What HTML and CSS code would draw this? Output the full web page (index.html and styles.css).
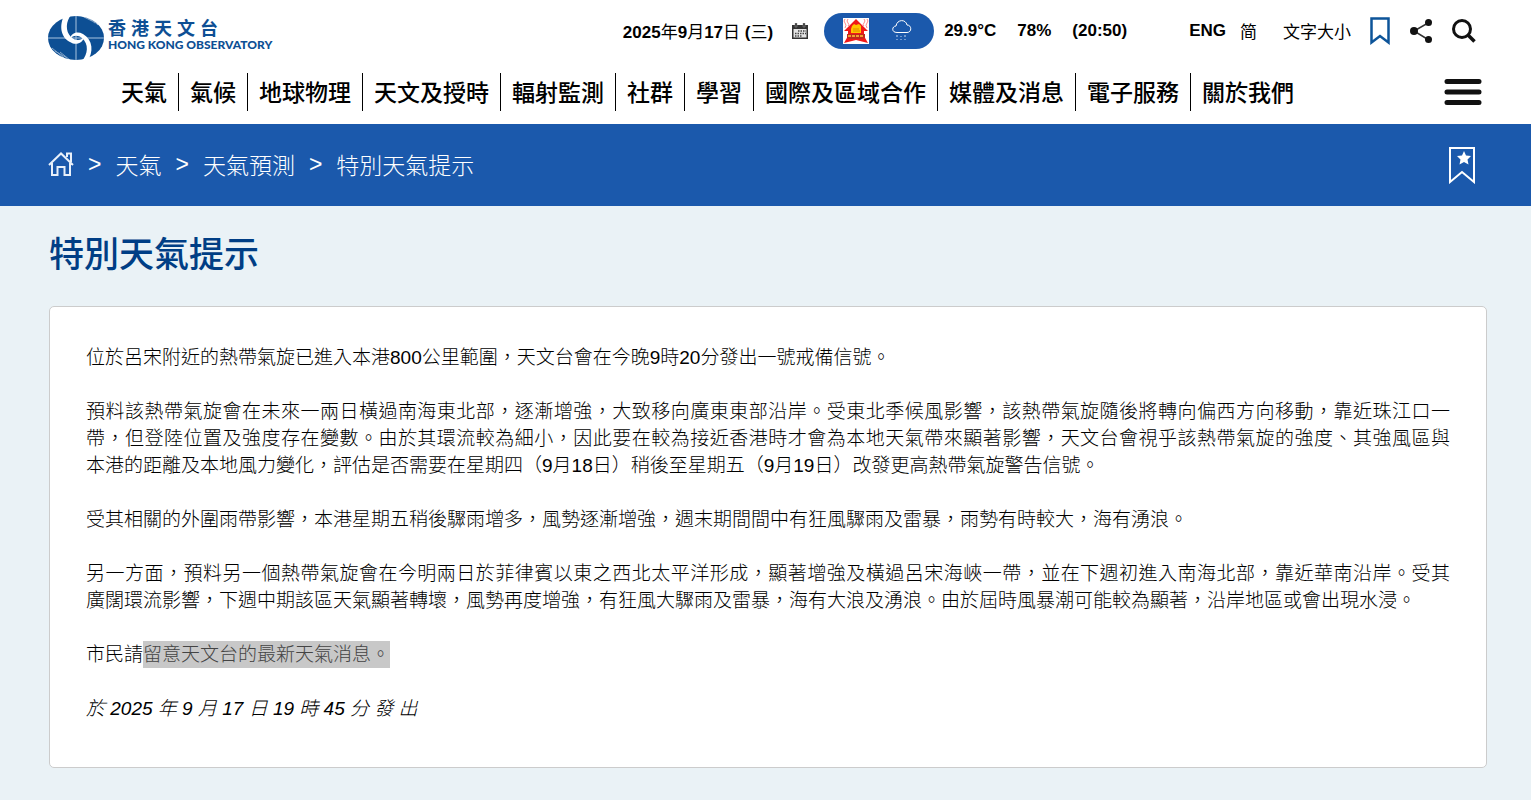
FILE: index.html
```html
<!DOCTYPE html>
<html lang="zh-Hant-HK">
<head>
    <meta charset="UTF-8">
    <meta name="viewport" content="width=device-width, initial-scale=1.0">
    <title>特別天氣提示 | 香港天文台</title>
    <link rel="stylesheet" href="styles.css">
</head>
<body>
    <header class="header">
        <div class="top-row">
            <a class="logo" href="#">
                <svg class="logo-mark" viewBox="0 0 56 48" aria-hidden="true">
                    <ellipse cx="28" cy="24" rx="28" ry="22" fill="#0d4f94"/>
                    <path d="M0 24h56M28 2v44" stroke="#a9c4df" stroke-width="1"/>
                    <path d="M17 0C11 10 12 23 22 28c6 4 13 1 14-5-3 4-9 4-13 0C17 17 18 7 23 1z" fill="#fff"/>
                    <path d="M39 48c7-10 6-22-4-28-6-3-12-1-13 5 3-4 8-4 12-1 7 6 6 16 0 23z" fill="#fff"/>
                    <path d="M32 1l12 6M36 1l11 8M40 2l10 9M7 37l12 7M4 34l12 10M12 38l10 8" stroke="#fff" stroke-width="1" opacity=".5"/>
                </svg>
                <span class="logo-text">
                    <span class="logo-zh">香 港 天 文 台</span>
                    <span class="logo-en">HONG KONG OBSERVATORY</span>
                </span>
            </a>
            <div class="status">
                <span class="date"><b>2025</b>年<b>9</b>月<b>17</b>日 <b>(</b>三<b>)</b></span>
                <a class="calendar" href="#" aria-label="日曆">
                    <svg width="16" height="16" viewBox="0 0 16 16">
                        <path d="M0 2h16v14H0z" fill="#333"/>
                        <path d="M1.500 6h13v8.500h-13z" fill="#e4e4e4"/>
                        <path d="M3 0h2v4H3zM11 0h2v4h-2z" fill="#333" stroke="#999" stroke-width=".5"/>
                        <path d="M6 8h8M3 10.500h11M3 13h7" stroke="#444" stroke-width="1.500" stroke-dasharray="1.500 1"/>
                    </svg>
                </a>
                <a class="weather-pill" href="#" aria-label="現時天氣">
                    <svg width="26" height="26" viewBox="0 0 26 26">
                        <path d="M0 0h26v26H0z" fill="#fff"/>
                        <path d="M2 1q-2 2 0 4t0 5M5 1q-2 2 0 4t0 3M21 1q2 2 0 4t0 3M24 1q2 2 0 4t0 5" stroke="#f88" fill="none"/>
                        <path d="M13 1l12 12h-4v5l4 7-12-3-12 3 4-7v-5H1z" fill="#f01818"/>
                        <path d="M9 8l2-2 2 1 3-1 2 2v7H8v-4z" fill="#ffc400"/>
                        <path d="M4 16h18v4l-4 1H8l-4-1z" fill="#c0281c"/>
                        <path d="M5 18h16" stroke="#f0a030" stroke-width="2" stroke-dasharray="3 1"/>
                        <path d="M10 11h6M10 13h7" stroke="#e08a00"/>
                    </svg>
                    <svg width="20" height="21" viewBox="0 0 20 21">
                        <path d="M5 12.500C-1 12.500 0 6 4 6 5-1 14-1 15 5c5 0 5 7.500 0 7.500z" fill="none" stroke="#fff" stroke-width="1"/>
                        <path d="M5 15v2M13 15v2M5 19v1M13 19v1M9 16v1M9 19v1" stroke="#c8daf0" stroke-width="1"/>
                    </svg>
                </a>
                <span class="reading"><b>29.9°C</b><b>78%</b><b>(20:50)</b></span>
                <span class="lang"><a href="#"><b>ENG</b></a><a class="sc" href="#" lang="zh-Hans">简</a></span>
                <a class="text-size" href="#">文字大小</a>
                <span class="tools">
                    <button type="button" aria-label="書籤">
                        <svg width="20" height="28" viewBox="0 0 20 28"><path d="M1.500 1.500h17v24L10 19l-8.500 6.500z" fill="none" stroke="#0d5499" stroke-width="2.500"/></svg>
                    </button>
                    <button type="button" aria-label="分享">
                        <svg width="22" height="24" viewBox="0 0 22 24"><path d="M18 4L4 12l14 8.500" fill="none" stroke="#333" stroke-width="1.500"/><circle cx="18.500" cy="3.500" r="3.500" fill="#111"/><circle cx="4" cy="12" r="4" fill="#111"/><circle cx="18.500" cy="20.500" r="3.500" fill="#111"/></svg>
                    </button>
                    <button type="button" aria-label="搜尋">
                        <svg width="24" height="24" viewBox="0 0 24 24"><circle cx="10" cy="10" r="8.500" fill="none" stroke="#111" stroke-width="3"/><path d="M16 16l6.500 6.500" stroke="#111" stroke-width="3.500"/></svg>
                    </button>
                </span>
            </div>
        </div>
        <div class="nav-row">
            <nav class="main-nav">
                <a href="#">天氣</a>
                <a href="#">氣候</a>
                <a href="#">地球物理</a>
                <a href="#">天文及授時</a>
                <a href="#">輻射監測</a>
                <a href="#">社群</a>
                <a href="#">學習</a>
                <a href="#">國際及區域合作</a>
                <a href="#">媒體及消息</a>
                <a href="#">電子服務</a>
                <a href="#">關於我們</a>
            </nav>
            <button class="menu-btn" type="button" aria-label="選單">
                <svg width="38" height="28" viewBox="0 0 38 28"><path d="M3 3.500h32M3 14h32M3 24.500h32" stroke="#111" stroke-width="5" stroke-linecap="round"/></svg>
            </button>
        </div>
    </header>

    <div class="crumb-bar">
        <nav class="crumbs" aria-label="導覽路徑">
            <a class="home" href="#" aria-label="主頁">
                <svg width="26" height="24" viewBox="0 0 26 24"><path d="M1 13L13 1.500 25 13M19 5V1.500h4V10M4 11v12h5.500v-8h7v8H22V11" fill="none" stroke="#e8f0fa" stroke-width="2"/></svg>
            </a>
            <span>&gt;</span>
            <a href="#">天氣</a>
            <span>&gt;</span>
            <a href="#">天氣預測</a>
            <span>&gt;</span>
            <a href="#">特別天氣提示</a>
        </nav>
        <button class="add-bookmark" type="button" aria-label="加入書籤">
            <svg width="26" height="37" viewBox="0 0 26 37"><path d="M1 1h24v34L13 25 1 35z" fill="none" stroke="#fff" stroke-width="2"/><path d="M15 4l2 4.500 5 .5-3.500 3.500 1 5L15 15l-4.500 2.500 1-5L8 9l5-.5z" fill="#fff"/></svg>
        </button>
    </div>

    <main class="content">
        <h1>特別天氣提示</h1>
        <article class="card">
            <p>位於呂宋附近的熱帶氣旋已進入本港800公里範圍，天文台會在今晚9時20分發出一號戒備信號。</p>
            <p>預料該熱帶氣旋會在未來一兩日橫過南海東北部，逐漸增強，大致移向廣東東部沿岸。受東北季候風影響，該熱帶氣旋隨後將轉向偏西方向移動，靠近珠江口一帶，但登陸位置及強度存在變數。由於其環流較為細小，因此要在較為接近香港時才會為本地天氣帶來顯著影響，天文台會視乎該熱帶氣旋的強度、其強風區與<span class="word">本港</span>的距離及本地風力變化，評估是否需要在星期四（9月18日）稍後至星期五（9月19日）改發更高熱帶氣旋警告信號。</p>
            <p>受其相關的外圍雨帶影響，本港星期五稍後驟雨增多，風勢逐漸增強，週末期間間中有狂風驟雨及雷暴，雨勢有時較大，海有湧浪。</p>
            <p>另一方面，預料另一個熱帶氣旋會在今明兩日於菲律賓以東之西北太平洋形成，顯著增強及橫過呂宋海峽一帶，並在下週初進入南海北部，靠近華南沿岸。受其<span class="word">廣闊</span>環流影響，下週中期該區天氣顯著轉壞，風勢再度增強，有狂風大驟雨及雷暴，海有大浪及湧浪。由於屆時風暴潮可能較為顯著，沿岸地區或會出現水浸。</p>
            <p>市民請<mark>留意天文台的最新天氣消息。</mark></p>
            <p class="issued">於 2025 年 9 月 17 日 19 時 45 分 發 出</p>
        </article>
    </main>
</body>
</html>
```

FILE: styles.css
```css
* {
    box-sizing: border-box;
}
body {
    margin: 0;
    background: #eaf2f6;
    color: #000;
    font-family: "Liberation Sans", "Noto Sans CJK TC", sans-serif;
    font-size: 17px;
}
a {
    color: inherit;
    text-decoration: none;
}
button {
    padding: 0;
    border: none;
    background: none;
    cursor: pointer;
}
svg {
    display: block;
}
.header {
    background: #fff;
    height: 124px;
}
.top-row {
    display: flex;
    justify-content: space-between;
    height: 62px;
    padding: 0 55px 0 48px;
}
.logo {
    display: flex;
    align-items: center;
    gap: 4px;
    padding-top: 14px;
    color: #0d4f94;
}
.logo-mark {
    width: 56px;
    height: 48px;
}
.logo-text {
    display: flex;
    flex-direction: column;
    padding-bottom: 4px;
    white-space: nowrap;
}
.logo-zh {
    font-size: 18px;
    line-height: 18px;
    font-weight: 700;
}
.logo-en {
    font-family: Lato, sans-serif;
    font-size: 12px;
    line-height: 14px;
    font-weight: 900;
}
.status {
    display: flex;
    align-items: center;
    height: 61px;
    white-space: nowrap;
}
.calendar {
    margin-left: 19px;
}
.weather-pill {
    display: flex;
    align-items: center;
    gap: 23px;
    width: 110px;
    height: 36px;
    margin-left: 16px;
    padding-left: 19px;
    border-radius: 18px;
    background: #1b59ac;
}
.reading {
    display: flex;
    gap: 21px;
    margin-left: 10px;
}
.lang {
    display: flex;
    gap: 14px;
    margin-left: 62px;
}
.sc {
    font-family: "Noto Sans CJK SC", sans-serif;
    line-height: 20px;
}
.text-size {
    margin-left: 26px;
}
.tools {
    display: flex;
    align-items: center;
    gap: 20px;
    margin-left: 19px;
}
.nav-row {
    display: flex;
    align-items: center;
    justify-content: space-between;
    padding: 11px 49px 0 110px;
}
.main-nav {
    display: flex;
    font-size: 23px;
    font-weight: 500;
    line-height: 40px;
    white-space: nowrap;
}
.main-nav a {
    height: 38px;
    padding: 0 11px;
    border-right: 1px solid #000;
}
.main-nav a:last-child {
    border-right: none;
}
.crumb-bar {
    display: flex;
    align-items: center;
    justify-content: space-between;
    height: 82px;
    padding: 0 56px 0 48px;
    background: #1b59ac;
    color: #fff;
}
.crumbs {
    display: flex;
    align-items: center;
    gap: 14px;
    padding-bottom: 2px;
    font-size: 23px;
    font-weight: 300;
}
.content {
    padding: 28px 44px 32px 49px;
}
h1 {
    margin: 0 0 30px;
    color: #003e85;
    font-size: 35px;
    line-height: 42px;
    font-weight: 500;
}
.card {
    padding: 37px 36px 45px;
    border: 1px solid #ccc;
    border-radius: 5px;
    background: #fff;
    font-size: 19px;
    font-weight: 300;
    line-height: 27px;
    text-align: justify;
}
.card p {
    margin: 0 0 27px;
}
.card p:last-child {
    margin-bottom: 0;
}
.word {
    white-space: nowrap;
}
mark {
    display: inline-block;
    background: #c8c8c8;
    color: #444;
}
.issued {
    font-style: italic;
}
```
